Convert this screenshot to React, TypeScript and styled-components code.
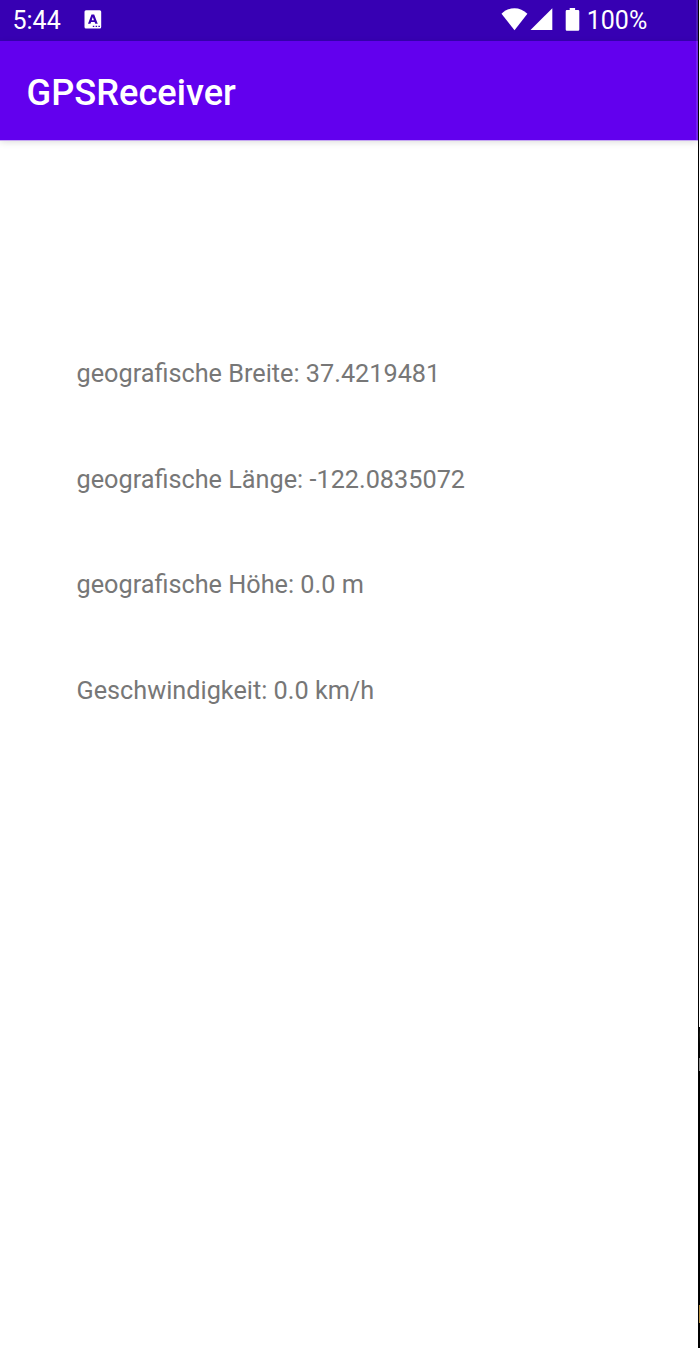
import React from "react";
import styled, { createGlobalStyle } from "styled-components";

const GlobalStyle = createGlobalStyle`
  * { box-sizing: border-box; }
  body { margin: 0; background: #fff; font-family: Roboto, sans-serif; }
`;

const Window = styled.div`
  display: flex;
  width: 700px;
  height: 1348px;
  overflow: hidden;
`;

const Screen = styled.div`
  flex: 1;
  display: flex;
  flex-direction: column;
  background: #fff;
`;

const Bezel = styled.div`
  width: 1px;
  background: #000;
`;

const Backdrop = styled.div`
  width: 1px;
  background: linear-gradient(
    #fff 1027px, #050505 1027px, #1c1d18 1035px, #050505 1044px,
    #050505 1058px, #8b8b8b 1058px, #8b8b8b 1071px, #000 1071px,
    #000 1305px, #b58f42 1305px, #b58f42 1323px, #000 1323px
  );
`;

const StatusBar = styled.header`
  display: flex;
  align-items: center;
  height: 41px;
  padding: 0 48.8px 0 12.5px;
  background: #3700b3;
  color: #fff;
  font-size: 25px;
  line-height: 41px;
  border-right: 2px solid #4b1cb6;
`;

const Clock = styled.span`
  width: 71.5px;
`;

const StatusIcons = styled.div`
  display: flex;
  align-items: center;
  margin-left: auto;
`;

const Icon = styled.svg<{ $gap?: number }>`
  display: block;
  flex: none;
  margin-right: ${(p) => p.$gap ?? 0}px;
`;

const AppBar = styled.div`
  flex: none;
  display: flex;
  align-items: center;
  height: 99px;
  padding: 5px 26.6px 0;
  background: #6200ee;
  border-right: 2px solid #7421ee;
  box-shadow: 0 1px 0 #c5a6f2, 0 2px 7px rgba(0, 0, 0, 0.14);
`;

const Title = styled.h1`
  margin: 0;
  color: #fff;
  font-size: 36.2px;
  font-weight: 500;
  line-height: 42px;
`;

const Readings = styled.main`
  display: flex;
  flex-direction: column;
  gap: 75.5px;
  padding: 219px 0 0 76.5px;
`;

const Reading = styled.div`
  color: #777;
  font-size: 25.26px;
  line-height: 30px;
  white-space: nowrap;
`;

const readings = [
  "geografische Breite: 37.4219481",
  "geografische Länge: -122.0835072",
  "geografische Höhe: 0.0 m",
  "Geschwindigkeit: 0.0 km/h",
];

export default function App() {
  return (
    <>
      <GlobalStyle />
      <Window>
        <Screen>
          <StatusBar>
            <Clock>5:44</Clock>
            <Icon width="18" height="21" viewBox="0 0 18 21">
              <path
                fill="#fff"
                fillRule="evenodd"
                d="M2 .2h13.7a1.5 1.5 0 0 1 1.5 1.5v15.4a1.5 1.5 0 0 1-1.5 1.5H2a1.5 1.5 0 0 1-1.5-1.5V1.7A1.5 1.5 0 0 1 2 .2ZM7.5 4.6 4 13.8h2.4l.7-1.9h3.5l.7 1.9h2.4l-3.5-9.2ZM8.8 7.1l1.1 3.1H7.7ZM8.8 15.8v1.2h1.5v-1.2Zm2.8 0v1.2h1.5v-1.2Zm2.8 0v1.2h1.5v-1.2Z"
              />
            </Icon>
            <StatusIcons>
              <Icon width="27" height="25" viewBox="0 0 27 25" $gap={2}>
                <path fill="#fff" d="M.5 5.8C7.8-1.7 19.2-1.7 26.4 5.8L13.5 22.2Z" />
              </Icon>
              <Icon width="23" height="25" viewBox="0 0 23 25" $gap={12}>
                <path fill="#fff" d="M22.3.3V22.1H.5Z" />
              </Icon>
              <Icon width="15" height="25" viewBox="0 0 15 25" $gap={7}>
                <path
                  fill="#fff"
                  d="M4.7 0h5.4v2.1h3a1.2 1.2 0 0 1 1.2 1.2v18.3a1.2 1.2 0 0 1-1.2 1.2H1.9A1.2 1.2 0 0 1 .7 21.6V3.3a1.2 1.2 0 0 1 1.2-1.2h2.8Z"
                />
              </Icon>
              <span>100%</span>
            </StatusIcons>
          </StatusBar>
          <AppBar>
            <Title>GPSReceiver</Title>
          </AppBar>
          <Readings>
            {readings.map((text) => (
              <Reading key={text}>{text}</Reading>
            ))}
          </Readings>
        </Screen>
        <Bezel />
        <Backdrop />
      </Window>
    </>
  );
}
